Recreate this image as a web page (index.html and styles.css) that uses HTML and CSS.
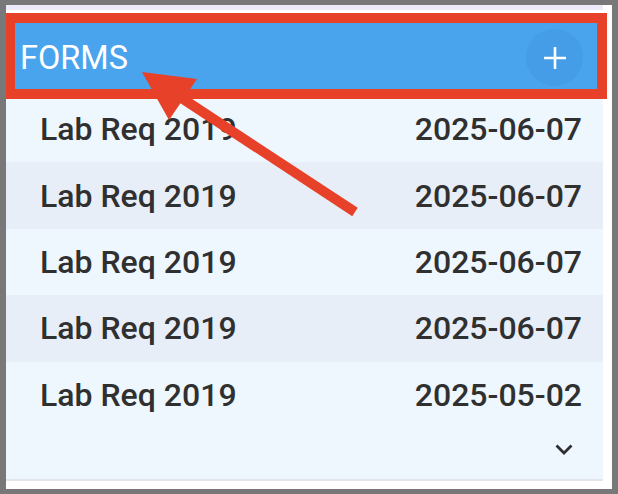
FILE: index.html
```html
<!DOCTYPE html>
<html lang="en">
<head>
    <meta charset="UTF-8">
    <meta name="viewport" content="width=device-width, initial-scale=1.0">
    <title>Forms</title>
    <link rel="stylesheet" href="styles.css">
</head>
<body>
    <div class="frame">
        <div class="panel">
            <div class="top-strip"></div>

            <div class="forms-header">
                <span class="forms-title">FORMS</span>
                <button class="add-btn" aria-label="Add form">
                    <svg width="22" height="22" viewBox="0 0 22 22">
                        <path d="M11 0 V22 M0 11 H22" stroke="#fff" stroke-width="2.6" fill="none"/>
                    </svg>
                </button>
            </div>

            <ul class="form-list">
                <li class="form-row"><span>Lab Req 2019</span><span>2025-06-07</span></li>
                <li class="form-row"><span>Lab Req 2019</span><span>2025-06-07</span></li>
                <li class="form-row"><span>Lab Req 2019</span><span>2025-06-07</span></li>
                <li class="form-row"><span>Lab Req 2019</span><span>2025-06-07</span></li>
                <li class="form-row"><span>Lab Req 2019</span><span>2025-05-02</span></li>
            </ul>

            <div class="show-more">
                <!-- chevron to expand the list -->
                <svg width="18" height="11" viewBox="0 0 18 11">
                    <path d="M1.5 1.5 L9 9 L16.5 1.5" stroke="#2f2f2f" stroke-width="2.8" fill="none"/>
                </svg>
            </div>
        </div>
    </div>

    <!-- callout box and arrow pointing at the header -->
    <svg class="callout" width="618" height="494" viewBox="0 0 618 494">
        <path fill="#e8412a" fill-rule="evenodd" d="M6 13 H607 V99 H6 Z M15 23 V89 H597 V23 Z"/>
        <line x1="180" y1="97" x2="355" y2="212" stroke="#e8412a" stroke-width="10"/>
        <polygon fill="#e8412a" points="142,72 197,79 169,120"/>
    </svg>
</body>
</html>
```

FILE: styles.css
```css
html, body {
    height: 100%;
}

body {
    margin: 0;
    padding: 5px 6px;
    box-sizing: border-box;
    background-color: #787878;
    font-family: Roboto, "Liberation Sans", sans-serif;
    position: relative;
}

.frame {
    width: 606px;
    height: 484px;
    background-color: #fff;
}

.panel {
    width: 597px;
}

.top-strip {
    height: 5px;
    margin-bottom: 3px;
    background-color: #efeaf9;
}

.forms-header {
    height: 83px;
    box-sizing: border-box;
    display: flex;
    align-items: center;
    justify-content: space-between;
    padding: 6px 20px 0 14px;
    background-color: #4aa3ed;
}

.forms-title {
    color: #fff;
    font-size: 32.5px;
    font-weight: 400;
}

.add-btn {
    width: 57px;
    height: 57px;
    border: none;
    border-radius: 50%;
    padding: 0;
    display: flex;
    align-items: center;
    justify-content: center;
    background-color: #459ce7;
}

.form-list {
    list-style: none;
    margin: 0;
    padding: 0;
}

.form-row {
    height: 66.4px;
    display: flex;
    align-items: center;
    justify-content: space-between;
    padding: 0 21px 0 34px;
    background-color: #eef6fe;
    color: #303030;
    font-size: 32px;
    font-weight: 500;
}

.form-row:nth-child(even) {
    background-color: #e7eef7;
}

.show-more {
    height: 35px;
    display: flex;
    justify-content: flex-end;
    align-items: flex-start;
    padding: 16px 30px 0 0;
    background-color: #eef6fe;
    border-bottom: 2px solid #e2e6ea;
}

.callout {
    position: absolute;
    top: 0;
    left: 0;
    pointer-events: none;
}
```
